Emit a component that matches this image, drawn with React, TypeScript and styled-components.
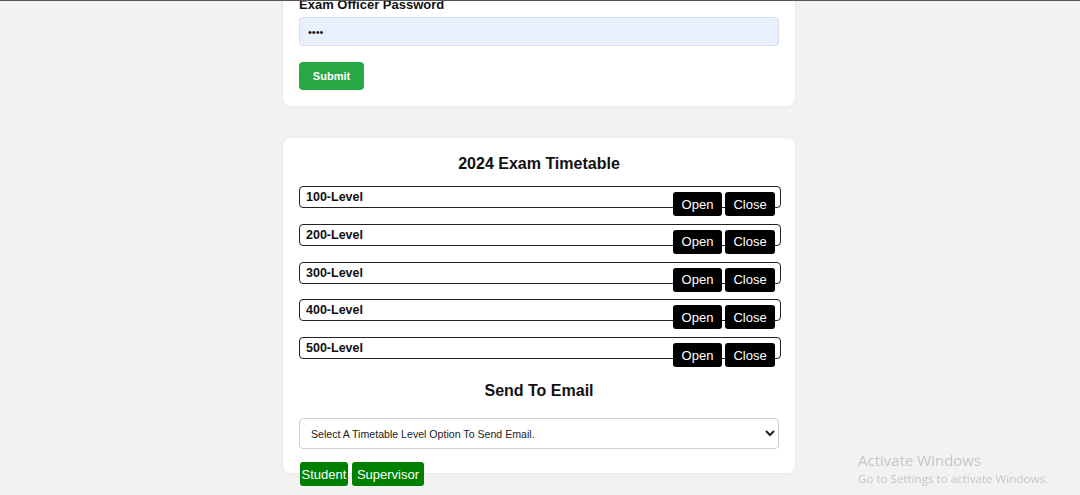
import React from 'react';
import styled, { createGlobalStyle } from 'styled-components';

const GlobalStyle = createGlobalStyle`
  html {
    overflow: hidden;
  }
  body {
    margin: 0;
    padding: 0;
    background: #f2f2f2;
    font-family: "Liberation Sans", Arial, sans-serif;
  }
`;

const TopEdge = styled.div`
  position: fixed;
  top: 0;
  left: 0;
  right: 0;
  height: 1px;
  background: #555;
  z-index: 5;
`;

const Page = styled.div`
  width: 512px;
  margin: -20px 0 0 calc(50% - 257px);
  padding-bottom: 9px;
`;

const Card = styled.div<{ $gap?: number; $bottom?: number }>`
  background: #fff;
  border-radius: 8px;
  box-shadow: 0 0 4px rgba(0, 0, 0, 0.06);
  padding: 16px 16px ${(p) => p.$bottom ?? 16}px;
  margin-top: ${(p) => p.$gap ?? 0}px;
`;

const Label = styled.label`
  display: block;
  font-size: 13px;
  font-weight: bold;
  line-height: 17px;
  color: #111;
  margin-bottom: 4px;
`;

const PasswordInput = styled.input`
  box-sizing: border-box;
  width: 100%;
  height: 29px;
  padding: 0 8px;
  border: 1px solid #d6dff0;
  border-radius: 4px;
  background: #e8f0fe;
  font-size: 11px;
  color: #111;
  outline: none;
`;

const SubmitButton = styled.button`
  display: block;
  margin-top: 16px;
  width: 65px;
  height: 28px;
  border: none;
  border-radius: 4px;
  background: #28a745;
  color: #fff;
  font-family: "Liberation Sans", Arial, sans-serif;
  font-size: 11px;
  font-weight: bold;
`;

const Title = styled.h2<{ $top?: number; $bottom: number }>`
  margin: ${(p) => p.$top ?? 0}px 0 ${(p) => p.$bottom}px;
  font-size: 16px;
  line-height: 20px;
  text-align: center;
  color: #111;
`;

const LevelList = styled.div`
  display: flex;
  flex-direction: column;
  gap: 15.75px;
`;

const LevelRow = styled.div`
  box-sizing: border-box;
  height: 22px;
  width: 482px;
  display: flex;
  justify-content: space-between;
  align-items: flex-start;
  padding: 0 5px 0 6px;
  border: 1px solid #222;
  border-radius: 4px;
`;

const LevelName = styled.span`
  font-size: 12.5px;
  font-weight: bold;
  line-height: 20px;
  color: #111;
`;

const ButtonGroup = styled.div<{ $top?: number }>`
  display: flex;
  gap: 3px;
  margin-top: ${(p) => p.$top ?? 0}px;
`;

const ActionButton = styled.button<{ $w: number; $bg: string }>`
  width: ${(p) => p.$w}px;
  height: 24px;
  padding: 0;
  border: none;
  border-radius: 3px;
  background: ${(p) => p.$bg};
  color: #fff;
  font-family: "Liberation Sans", Arial, sans-serif;
  font-size: 13px;
`;

const LevelSelect = styled.select`
  box-sizing: border-box;
  width: 100%;
  height: 31px;
  padding: 0 7px;
  border: 1px solid #cfcfcf;
  border-radius: 4px;
  background: #fff;
  color: #222;
  font-family: "Liberation Sans", Arial, sans-serif;
  font-size: 10.6px;
`;

const SendRow = styled.div`
  position: relative;
  display: flex;
  gap: 4px;
  margin: -11px 0 0 17px;
`;

const Watermark = styled.div`
  position: fixed;
  left: 858px;
  top: 451px;
  color: #c6c6c6;
  font-family: "Open Sans", "Noto Sans", sans-serif;
  line-height: 1.2;
`;

const WatermarkTitle = styled.div`
  font-size: 15px;
`;

const WatermarkSub = styled.div`
  font-size: 11.6px;
  margin-top: 3px;
`;

const levels = ['100-Level', '200-Level', '300-Level', '400-Level', '500-Level'];

const App = () => {
  return (
    <>
      <GlobalStyle />
      <TopEdge />
      <Page>
        <Card>
          <Label>Exam Officer Password</Label>
          <PasswordInput type="password" defaultValue="1234" />
          <SubmitButton>Submit</SubmitButton>
        </Card>

        <Card $gap={32} $bottom={24}>
          <Title $bottom={12}>2024 Exam Timetable</Title>
          <LevelList>
            {levels.map((lvl) => (
              <LevelRow key={lvl}>
                <LevelName>{lvl}</LevelName>
                <ButtonGroup $top={5}>
                  <ActionButton $w={49} $bg="#000">Open</ActionButton>
                  <ActionButton $w={50} $bg="#000">Close</ActionButton>
                </ButtonGroup>
              </LevelRow>
            ))}
          </LevelList>

          <Title $top={22} $bottom={17}>Send To Email</Title>
          <LevelSelect defaultValue="">
            <option value="">Select A Timetable Level Option To Send Email.</option>
            {levels.map((lvl) => (
              <option key={lvl} value={lvl}>{lvl}</option>
            ))}
          </LevelSelect>
        </Card>
        {/* the send buttons hang off the bottom edge of the card */}
        <SendRow>
          <ActionButton $w={48} $bg="#008000">Student</ActionButton>
          <ActionButton $w={72} $bg="#008000">Supervisor</ActionButton>
        </SendRow>
      </Page>
      <Watermark>
        <WatermarkTitle>Activate Windows</WatermarkTitle>
        <WatermarkSub>Go to Settings to activate Windows.</WatermarkSub>
      </Watermark>
    </>
  );
};

export default App;
